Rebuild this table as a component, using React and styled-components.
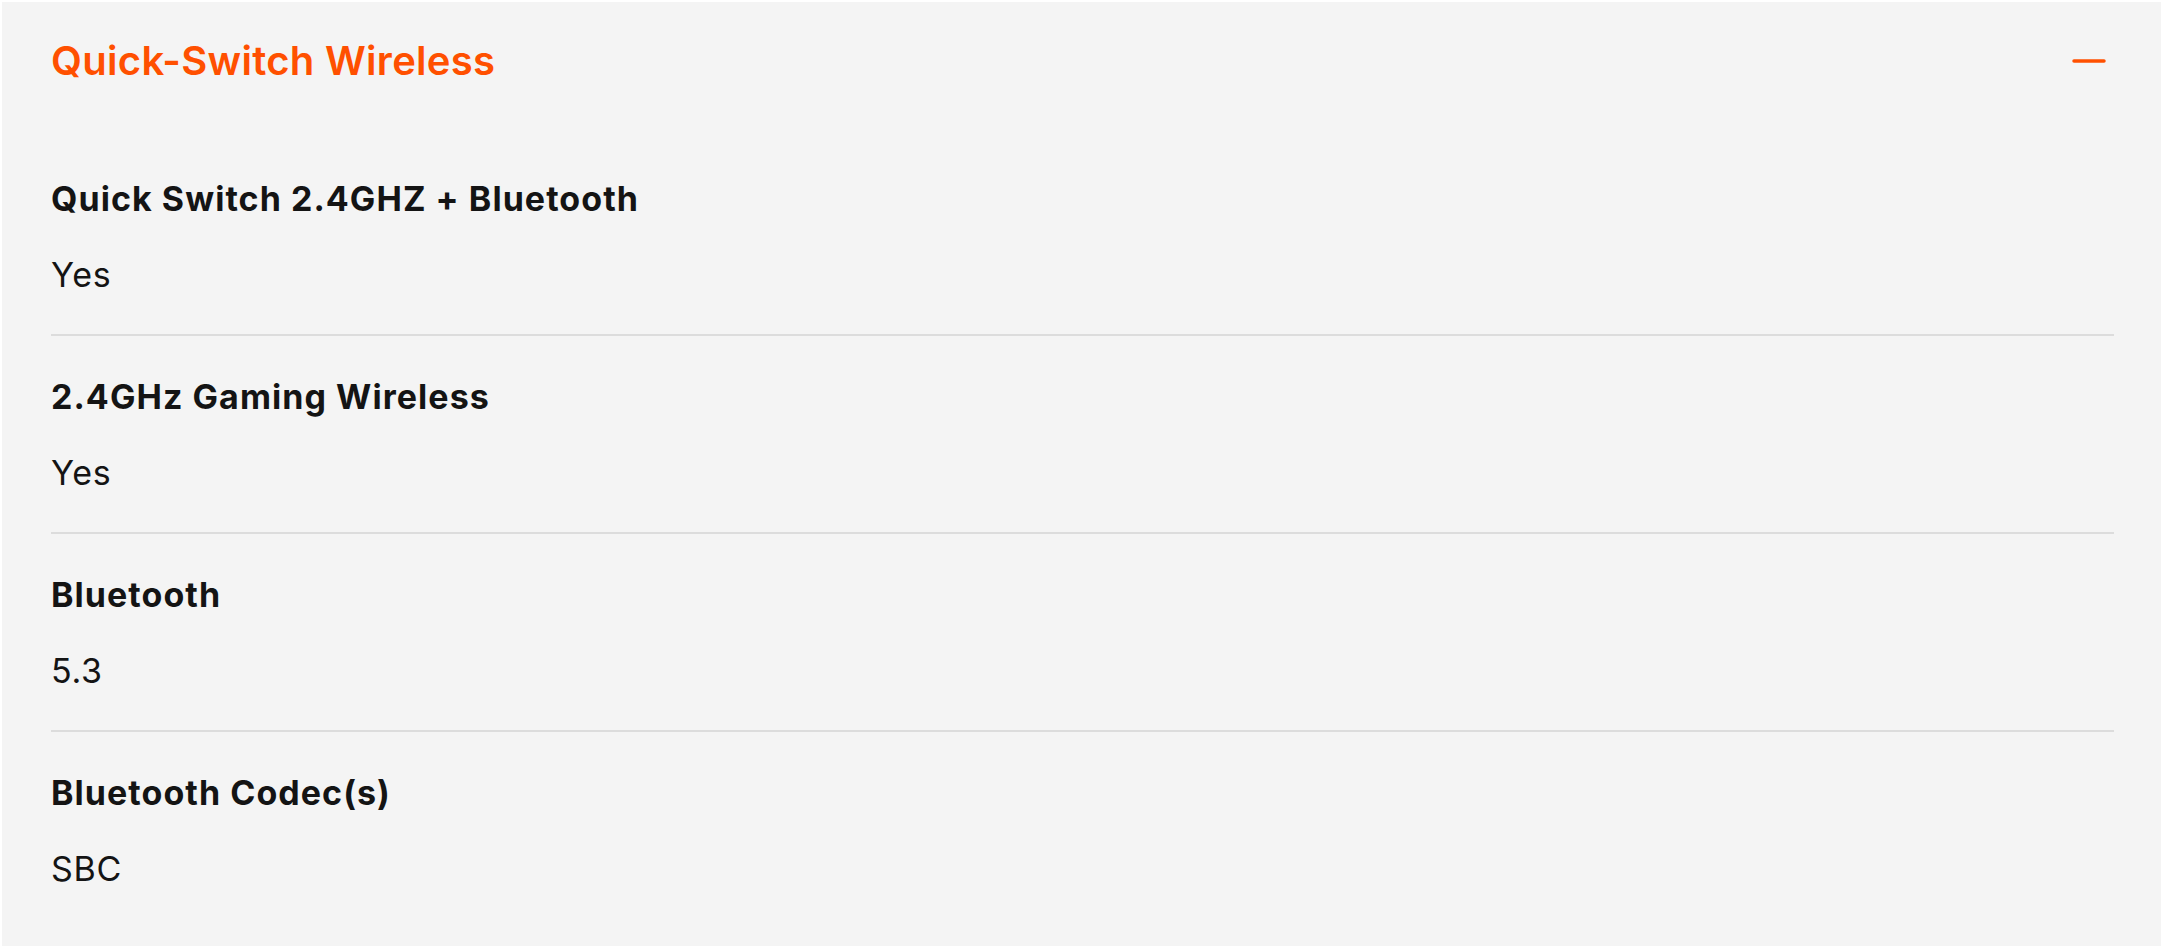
import React from 'react';
import styled, { createGlobalStyle } from 'styled-components';

const GlobalStyle = createGlobalStyle`
  html, body {
    margin: 0;
    padding: 0;
    background: #ffffff;
    overflow: hidden;
  }
  body {
    font-family: Inter, "Noto Sans", "Liberation Sans", sans-serif;
  }
`;

const specs = [
  { label: 'Quick Switch 2.4GHZ + Bluetooth', value: 'Yes' },
  { label: '2.4GHz Gaming Wireless', value: 'Yes' },
  { label: 'Bluetooth', value: '5.3' },
  { label: 'Bluetooth Codec(s)', value: 'SBC' },
];

const MinusIcon = () => (
  <svg width="34" height="8" viewBox="0 0 34 8" fill="none">
    <line x1="2" y1="4" x2="32" y2="4" stroke="#ff5000" strokeWidth="3.5" strokeLinecap="round" />
  </svg>
);

export default function App() {
  return (
    <>
      <GlobalStyle />
      <Page>
        <Panel>
          <Header>
            <Title>Quick-Switch Wireless</Title>
            <Toggle aria-label="Collapse">
              <MinusIcon />
            </Toggle>
          </Header>
          <SpecList>
            {specs.map(spec => (
              <SpecRow key={spec.label}>
                <SpecLabel>{spec.label}</SpecLabel>
                <SpecValue>{spec.value}</SpecValue>
              </SpecRow>
            ))}
          </SpecList>
        </Panel>
      </Page>
    </>
  );
}

const Page = styled.div`
  padding: 2px 1px 0 2px;
  height: 946px;
  box-sizing: border-box;
`;

const Panel = styled.section`
  background: #f4f4f4;
  height: 100%;
  padding: 0 47px 0 49px;
  box-sizing: border-box;
  overflow: hidden;
`;

const Header = styled.div`
  display: flex;
  align-items: center;
  justify-content: space-between;
  padding: 35px 0 53px;
`;

const Title = styled.h2`
  margin: 0;
  font-size: 40px;
  line-height: 48px;
  font-weight: 600;
  color: #ff5000;
  letter-spacing: 0.3px;
`;

const Toggle = styled.button`
  display: flex;
  align-items: center;
  justify-content: center;
  border: 0;
  padding: 0;
  margin-right: 8px;
  background: none;
  cursor: pointer;
`;

const SpecList = styled.div`
  display: flex;
  flex-direction: column;
`;

const SpecRow = styled.div`
  display: flex;
  flex-direction: column;
  gap: 28px;
  padding: 37px 0 35px;
  border-top: 2px solid #dcdcdc;

  &:first-child {
    border-top: 0;
  }
`;

const SpecLabel = styled.div`
  font-size: 34px;
  line-height: 48px;
  font-weight: 700;
  letter-spacing: 1.05px;
  color: #141414;
`;

const SpecValue = styled.div`
  font-size: 34px;
  line-height: 48px;
  font-weight: 400;
  letter-spacing: 0.7px;
  color: #141414;
`;
